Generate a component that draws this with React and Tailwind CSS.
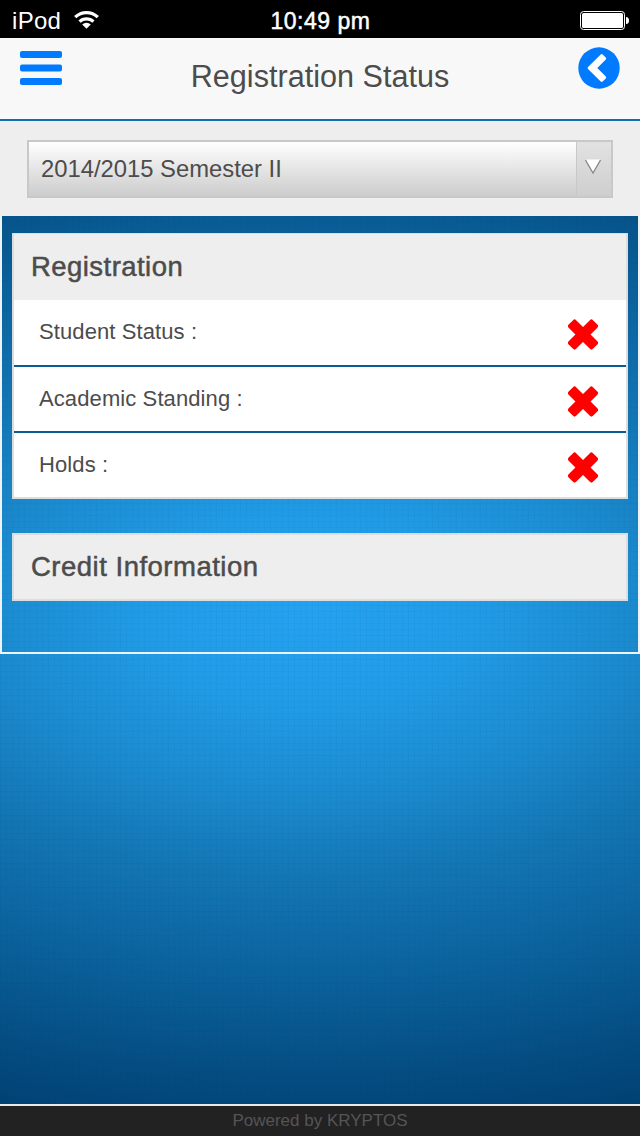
import React from "react";

const rows = ["Student Status :", "Academic Standing :", "Holds :"];

function Cross() {
  return (
    <svg className="mt-[5px] h-[31px] w-[31px]" viewBox="0 0 31 31" fill="#ff0000">
      <g transform="rotate(45 15 15.5)">
        <rect x="-2.2" y="10.2" width="34.4" height="10.6" rx="2.2" />
        <rect x="9.7" y="-1.7" width="10.6" height="34.4" rx="2.2" />
      </g>
    </svg>
  );
}

function StatusBar() {
  return (
    <div className="grid h-[38px] shrink-0 grid-cols-3 items-center bg-black pr-[11px] pl-3 text-white">
      <div className="flex items-center gap-[13px]">
        <span className="mt-1 text-[24px] leading-6 font-light tracking-[0.3px]">iPod</span>
        <svg className="h-[19px] w-[25px]" viewBox="0 0 25 19" fill="none" stroke="#fff" strokeWidth="3.2">
          <path d="M1.2 7.2a16 16 0 0 1 22.6 0" />
          <path d="M5.6 11.7a9.8 9.8 0 0 1 13.8 0" />
          <path d="M8.2 14.5a6.2 6.2 0 0 1 8.6 0L12.5 18.8z" fill="#fff" stroke="none" />
        </svg>
      </div>
      <div className="mt-1 text-center text-[23px] leading-6 font-medium tracking-[0.5px] whitespace-nowrap [-webkit-text-stroke:0.5px_white]">10:49 pm</div>
      <svg className="mt-[3px] h-[19px] w-[49px] justify-self-end" viewBox="0 0 49 19">
        <rect x="0.5" y="0.5" width="44" height="18" rx="3" fill="none" stroke="#fff" />
        <rect x="2" y="2" width="41" height="15" rx="1.5" fill="#fff" />
        <path d="M46 6q3 0 3 3.5T46 13z" fill="#fff" />
      </svg>
    </div>
  );
}

export default function App() {
  return (
    <div className="flex h-[1136px] w-[640px] flex-col overflow-hidden font-['Liberation_Sans',Arial,sans-serif] text-[#4c4c4c]">
      <StatusBar />
      <header className="flex h-[83px] shrink-0 items-start justify-between border-b-2 border-[#0e6fa9] bg-[#f8f8f8] pr-5 pl-5">
        <svg className="mt-[13px] h-[34px] w-[42px]" viewBox="0 0 42 34" fill="#007aff">
          <rect y="0" width="42" height="7" rx="2" />
          <rect y="13.5" width="42" height="7" rx="2" />
          <rect y="27" width="42" height="7" rx="2" />
        </svg>
        <h1 className="mt-5 text-[30.6px] leading-9">Registration Status</h1>
        <svg className="mt-[9px] h-[42px] w-[42px]" viewBox="0 0 42 42">
          <circle cx="21" cy="21" r="20.7" fill="#007aff" />
          <path d="M22.7 7.4Q23.7 6.5 24.7 7.4L27.8 10.5Q28.7 11.5 27.8 12.5L19.3 21L27.8 29.5Q28.7 30.5 27.8 31.5L24.7 34.6Q23.7 35.5 22.7 34.6L10 22Q9 21 10 20Z" fill="#fff" />
        </svg>
      </header>
      <div className="h-[95px] shrink-0 bg-[#eeeeee] pt-[19px] pr-[27px] pl-[27px]">
        <div className="flex h-[58px] border-2 border-[#c8c8c8] bg-linear-to-b from-white to-[#cccccc]">
          <div className="flex-1 pt-[11px] pl-3 text-[23.8px] leading-8">2014/2015 Semester II</div>
          <div className="flex w-[35px] border-l border-[#c8c8c8] bg-linear-to-b from-[#e2e2e2] to-[#cecece] pt-[17px] pl-2">
            <svg className="h-[15px] w-4" viewBox="0 0 16 15">
              <path d="M0.5 0.5h15L8 14.5z" fill="#fff" />
              <path d="M0.5 1L8 14L15.5 1" fill="none" stroke="#888" strokeWidth="1.3" />
            </svg>
          </div>
        </div>
      </div>
      <main className="min-h-0 flex-1 bg-[repeating-linear-gradient(0deg,rgba(0,40,100,.035)_0px,rgba(0,40,100,.035)_1px,transparent_1px,transparent_6px),repeating-linear-gradient(90deg,rgba(0,40,100,.035)_0px,rgba(0,40,100,.035)_1px,transparent_1px,transparent_6px),radial-gradient(940px_540px_at_310px_395px,#24a2f0_0%,#219be6_18%,#1b8bcf_34%,#1478b6_48%,#0d68a4_62%,#085b93_74%,#044d82_86%,#003f70_100%)]">
        <div className="h-[438px] border-2 border-t-0 border-[#eef3f7] px-[10px] pt-[17px]">
          <section className="h-[266px] border-2 border-t-1 border-[#dddddd] bg-white">
            <h2 className="h-[66px] bg-[#eeeeee] pt-4 pl-[17px] text-[27.5px] leading-[34px] font-medium tracking-[0.45px] [-webkit-text-stroke:0.5px_#4c4c4c]">Registration</h2>
            {rows.map((label, i) => (
              <div key={label} className={"flex justify-between pr-[27px] pl-[25px] " + (i < 2 ? "h-[66.5px] border-b-2 border-[#0b5c94]" : "h-16")}>
                <span className="pt-[17px] text-[22px] leading-[30px] tracking-[0.1px]">{label}</span>
                <span className="pt-[14px]"><Cross /></span>
              </div>
            ))}
          </section>
          <section className="mt-[34px] h-[68px] border-2 border-[#dddddd] bg-[#eeeeee]">
            <h2 className="pt-[15px] pl-[17px] text-[27.5px] leading-[34px] font-medium tracking-[0.5px] [-webkit-text-stroke:0.5px_#4c4c4c]">Credit Information</h2>
          </section>
        </div>
      </main>
      <footer className="h-8 shrink-0 border-t-2 border-[#e8e8e8] bg-[#222222] pt-[3px] text-center text-[17px] leading-6 text-[#555555]">Powered by KRYPTOS</footer>
    </div>
  );
}
